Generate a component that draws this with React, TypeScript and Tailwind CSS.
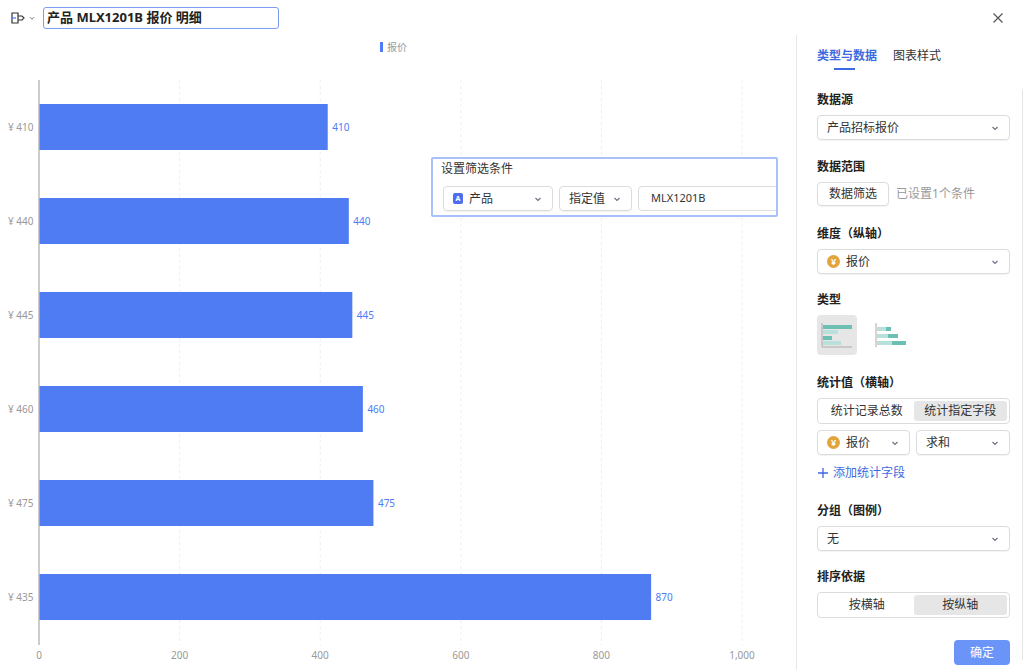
import React from "react";

const F = { fontFamily: '"Noto Sans", "Noto Sans CJK SC", sans-serif' };
const rows = [
  { l: "¥ 410", v: 410 },
  { l: "¥ 440", v: 440 },
  { l: "¥ 445", v: 445 },
  { l: "¥ 460", v: 460 },
  { l: "¥ 475", v: 475 },
  { l: "¥ 435", v: 870 },
];

const Chev = () => (
  <svg width="10" height="10" viewBox="0 0 10 10" className="text-gray-500">
    <path d="M2.5 4l2.5 2.5L7.5 4" fill="none" stroke="currentColor" strokeWidth="1.2" />
  </svg>
);

const Yen = () => (
  <span className="w-[13px] h-[13px] rounded-full bg-[#e3a43c] text-white text-[9px] leading-[13px] text-center font-bold">¥</span>
);

function Select({ children, className = "" }: { children: React.ReactNode; className?: string }) {
  return (
    <div className={`h-[25px] border border-[#dcdcdc] rounded-[4px] flex items-center justify-between px-[9px] text-[12px] leading-[16px] text-[#333] shadow-[0_1px_1px_rgba(0,0,0,0.05)] ${className}`}>
      <div className="flex items-center gap-[6px]">{children}</div>
      <Chev />
    </div>
  );
}

const Label = ({ children, mt }: { children: React.ReactNode; mt: string }) => (
  <div className={`text-[12px] leading-[16px] font-bold text-[#222] mb-[7px] ${mt}`}>{children}</div>
);

export default function App() {
  const x0 = 39, k = 0.703;
  return (
    <div style={F} className="w-[1024px] h-[670px] bg-white relative overflow-hidden">
      <div className="h-[35px] flex items-center pl-[10px] pr-[20px]">
        <svg width="16" height="14" viewBox="0 0 16 14" className="text-[#333]">
          <path d="M2 2h6v10H2zM8 5h4l2 2-2 2H8" fill="none" stroke="currentColor" strokeWidth="1.2" />
          <path d="M2 7h4" stroke="#4d7cf6" strokeWidth="1.2" />
        </svg>
        <svg width="8" height="8" viewBox="0 0 10 10" className="ml-[2px] text-gray-500"><path d="M2.5 4l2.5 2.5L7.5 4" fill="none" stroke="currentColor" strokeWidth="1.2" /></svg>
        <div className="ml-[7px] w-[236px] h-[22px] border border-[#7e9cf0] rounded-[3px] px-[3px] flex items-center text-[13px] font-bold text-[#222]">产品 MLX1201B 报价 明细</div>
        <div className="flex-1" />
        <svg width="12" height="12" viewBox="0 0 12 12"><path d="M1.5 1.5l9 9M10.5 1.5l-9 9" stroke="#555" strokeWidth="1.2" /></svg>
      </div>
      <div className="flex h-[635px]">
        <div className="w-[797px] relative border-r border-[#e8e8e8]">
          <svg width="797" height="635" viewBox="0 35 797 635" className="absolute left-0 top-0" style={F}>
            <rect x="380" y="42" width="3" height="10" fill="#4d7cf6" />
            <text x="387" y="51" fontSize="10" fill="#999">报价</text>
            {[200, 400, 600, 800, 1000].map((v) => (
              <line key={v} x1={x0 + v * k} x2={x0 + v * k} y1="80" y2="645" stroke="#eee" strokeDasharray="3 3" />
            ))}
            <line x1={x0} x2={x0} y1="80" y2="645" stroke="#999" />
            {[0, 200, 400, 600, 800, 1000].map((v) => (
              <text key={v} x={x0 + v * k} y="659" fontSize="10" fill="#999" textAnchor="middle">{v === 1000 ? "1,000" : v}</text>
            ))}
            {rows.map((r, i) => {
              const cy = 127 + i * 94;
              const w = r.v * k;
              return (
                <g key={i}>
                  <rect x={x0 + 0.5} y={cy - 23} width={w} height={46} fill="#507cf3" />
                  <text x={x0 + w + 5} y={cy + 4} fontSize="10" fill="#4d7cf6">{r.v}</text>
                  <text x="8" y={cy + 4} fontSize="10" fill="#999">{r.l}</text>
                </g>
              );
            })}
          </svg>
          <div className="absolute left-[431px] top-[122px] w-[347px] h-[60px] bg-white border-2 border-[#a9c1fa] rounded-[2px] overflow-hidden">
            <div className="text-[12px] text-[#333] pl-[8px] pt-[1px]">设置筛选条件</div>
            <div className="flex gap-[6px] pl-[10px] mt-[8px]">
              <Select className="w-[110px] shrink-0"><span className="w-[10px] h-[11px] bg-[#4d6ef0] rounded-[2px] text-white text-[7px] leading-[11px] text-center font-bold">A</span>产品</Select>
              <Select className="w-[73px] shrink-0">指定值</Select>
              <div className="h-[25px] w-[200px] shrink-0 border border-[#dcdcdc] rounded-[4px] flex items-center px-[12px] text-[11px] text-[#333]">MLX1201B</div>
            </div>
          </div>
        </div>
        <div className="flex-1 relative">
          <div className="flex gap-[16px] pl-[20px] mt-[12px] text-[12px] leading-[18px]">
            <div className="text-[#3e6ae1] font-bold relative">类型与数据<div className="absolute left-[17px] w-[21px] h-[2px] bg-[#3e6ae1] top-[21px]" /></div>
            <div className="text-[#333]">图表样式</div>
          </div>
          <div className="absolute right-[1px] top-[55px] bottom-[10px] w-px bg-[#e5e5e5]" />
          <div className="pl-[20px] pr-[14px]">
            <Label mt="mt-[27px]">数据源</Label>
            <Select>产品招标报价</Select>
            <Label mt="mt-[19px]">数据范围</Label>
            <div className="flex items-center gap-[7px]">
              <div className="h-[24px] px-[11px] border border-[#dcdcdc] rounded-[4px] text-[12px] text-[#333] flex items-center shadow-[0_1px_1px_rgba(0,0,0,0.05)]">数据筛选</div>
              <span className="text-[12px] text-[#999]">已设置1个条件</span>
            </div>
            <Label mt="mt-[20px]">维度（纵轴）</Label>
            <Select><Yen />报价</Select>
            <Label mt="mt-[18px]">类型</Label>
            <div className="flex gap-[14px]">
              <div className="w-[40px] h-[40px] bg-[#e6e6e6] rounded-[4px] flex items-center justify-center">
                <svg width="32" height="28" viewBox="0 0 32 28">
                  <path d="M1 2v24h30" fill="none" stroke="#aaa" />
                  <rect x="2" y="4" width="29" height="4" fill="#6cc0b3" />
                  <rect x="2" y="9" width="15" height="4" fill="#b9e0da" />
                  <rect x="2" y="15" width="9" height="4" fill="#6cc0b3" />
                  <rect x="2" y="20" width="18" height="4" fill="#b9e0da" />
                </svg>
              </div>
              <div className="w-[40px] h-[40px] flex items-center justify-center">
                <svg width="32" height="28" viewBox="0 0 32 28">
                  <path d="M1 2v24" fill="none" stroke="#aaa" />
                  <rect x="2" y="6" width="9" height="4" fill="#b9e0da" /><rect x="11" y="6" width="5" height="4" fill="#6cc0b3" />
                  <rect x="2" y="13" width="11" height="4" fill="#b9e0da" /><rect x="13" y="13" width="10" height="4" fill="#6cc0b3" />
                  <rect x="2" y="20" width="15" height="4" fill="#b9e0da" /><rect x="17" y="20" width="14" height="4" fill="#6cc0b3" />
                </svg>
              </div>
            </div>
            <Label mt="mt-[20px]">统计值（横轴）</Label>
            <div className="h-[26px] border border-[#dcdcdc] rounded-[4px] flex p-[2px] text-[12px] text-[#333]">
              <div className="flex-1 flex items-center justify-center">统计记录总数</div>
              <div className="flex-1 flex items-center justify-center bg-[#e6e6e6] rounded-[3px]">统计指定字段</div>
            </div>
            <div className="flex gap-[6px] mt-[6px]">
              <Select className="flex-1"><Yen />报价</Select>
              <Select className="w-[94px]">求和</Select>
            </div>
            <div className="flex items-center gap-[4px] mt-[10px] text-[12px] leading-[16px] text-[#3e6ae1]">
              <svg width="12" height="12" viewBox="0 0 12 12"><path d="M6 1v10M1 6h10" stroke="#3e6ae1" strokeWidth="1.3" /></svg>添加统计字段
            </div>
            <Label mt="mt-[22px]">分组（图例）</Label>
            <Select>无</Select>
            <Label mt="mt-[18px]">排序依据</Label>
            <div className="h-[26px] border border-[#dcdcdc] rounded-[4px] flex p-[2px] text-[12px] text-[#333]">
              <div className="flex-1 flex items-center justify-center">按横轴</div>
              <div className="flex-1 flex items-center justify-center bg-[#e6e6e6] rounded-[3px]">按纵轴</div>
            </div>
            <div className="flex justify-end mt-[22px]">
              <div className="w-[56px] h-[25px] bg-[#6a94f7] rounded-[4px] text-white text-[12px] flex items-center justify-center">确定</div>
            </div>
          </div>
        </div>
      </div>
    </div>
  );
}
